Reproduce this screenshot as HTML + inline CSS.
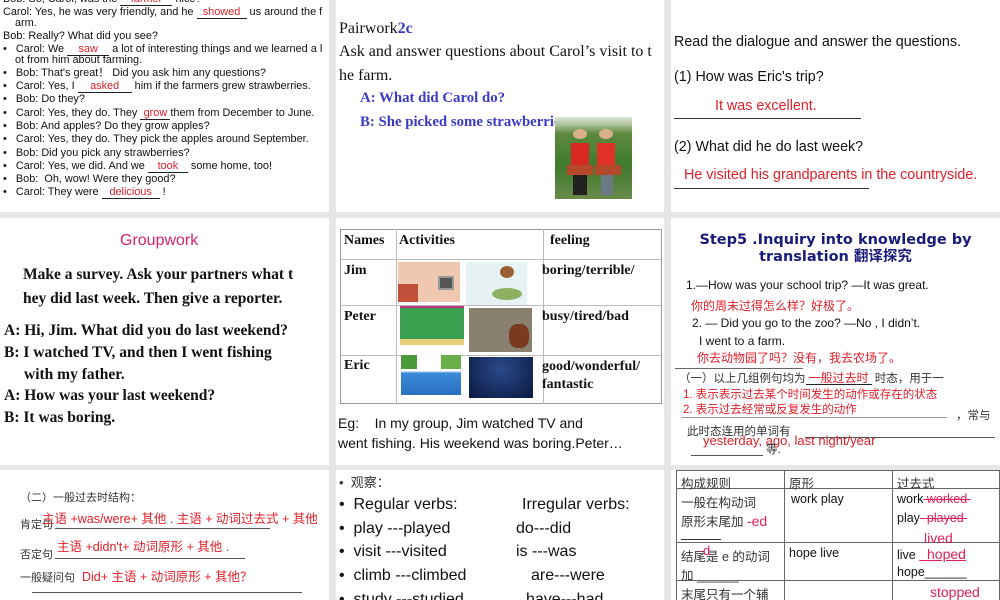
<!DOCTYPE html>
<html><head><meta charset="utf-8"><style>
*{margin:0;padding:0;box-sizing:border-box}
body{width:1000px;height:600px;background:#e6e6e6;position:relative;overflow:hidden;font-family:"Liberation Sans","Noto Sans CJK SC",sans-serif;color:#111}
.p{position:absolute;background:#fff;overflow:hidden}
.a{position:absolute;white-space:nowrap}
.r{color:#e0202a}
.u{display:inline-block;border-bottom:1px solid #222;text-align:center;line-height:1}
.s{font-family:"Liberation Serif","Noto Serif CJK SC",serif}
.cn{font-family:"Liberation Sans","Noto Sans CJK SC",sans-serif}
.hl{position:absolute;height:1px;background:#333}
</style></head><body>

<!-- panel 1 -->
<div class="p" style="left:0;top:0;width:329px;height:212px;font-size:10.9px;line-height:13px">
<div class="a" style="left:3px;top:-7px">Bob: So, Carol, was the <span class="u r" style="width:52px">farmer</span> nice?</div>
<div class="a" style="left:3px;top:6px">Carol: Yes, he was very friendly, and he <span class="u r" style="width:50px">showed</span> us around the f</div>
<div class="a" style="left:15px;top:17px">arm.</div>
<div class="a" style="left:3px;top:30px">Bob: Really? What did you see?</div>
<div class="a" style="left:3px;top:43px">•&nbsp;&nbsp; Carol: We <span class="u r" style="width:42px">saw</span> a lot of interesting things and we learned a l</div>
<div class="a" style="left:15px;top:54px">ot from him about farming.</div>
<div class="a" style="left:3px;top:67px">•&nbsp;&nbsp; Bob: That's great！ Did you ask him any questions?</div>
<div class="a" style="left:3px;top:80px">•&nbsp;&nbsp; Carol: Yes, I <span class="u r" style="width:54px">asked</span> him if the farmers grew strawberries.</div>
<div class="a" style="left:3px;top:93px">•&nbsp;&nbsp; Bob: Do they?</div>
<div class="a" style="left:3px;top:107px">•&nbsp;&nbsp; Carol: Yes, they do. They <span class="u r" style="width:30px">grow</span>them from December to June.</div>
<div class="a" style="left:3px;top:120px">•&nbsp;&nbsp; Bob: And apples? Do they grow apples?</div>
<div class="a" style="left:3px;top:133px">•&nbsp;&nbsp; Carol: Yes, they do. They pick the apples around September.</div>
<div class="a" style="left:3px;top:147px">•&nbsp;&nbsp; Bob: Did you pick any strawberries?</div>
<div class="a" style="left:3px;top:160px">•&nbsp;&nbsp; Carol: Yes, we did. And we <span class="u r" style="width:40px">took</span> some home, too!</div>
<div class="a" style="left:3px;top:173px">•&nbsp;&nbsp; Bob:&nbsp; Oh, wow! Were they good?</div>
<div class="a" style="left:3px;top:186px">•&nbsp;&nbsp; Carol: They were <span class="u r" style="width:58px">delicious</span> !</div>
</div>

<!-- panel 2 -->
<div class="p s" style="left:336px;top:0;width:328px;height:212px;font-size:16px">
<div class="a" style="left:3px;top:20px">Pairwork<span style="color:#3a3ac8;font-weight:bold">2c</span></div>
<div class="a" style="left:3px;top:43px">Ask and answer questions about Carol’s visit to t</div>
<div class="a" style="left:3px;top:67px">he farm.</div>
<div class="a" style="left:24px;top:90px;color:#3a3ac8;font-weight:bold;font-size:14.8px">A: What did Carol do?</div>
<div class="a" style="left:24px;top:114px;color:#3a3ac8;font-weight:bold;font-size:14.8px">B: She picked some strawberries.</div>
<div style="position:absolute;left:219px;top:117px;width:77px;height:82px;background:linear-gradient(180deg,#d8e4d0 0,#b9c9a8 8%,#5e8a3e 20%,#3f7a2c 60%,#6a8a4a 100%)">
<div style="position:absolute;left:18px;top:12px;width:14px;height:10px;background:#d9b08a;border-radius:50%"></div>
<div style="position:absolute;left:44px;top:12px;width:14px;height:10px;background:#d9b08a;border-radius:50%"></div>
<div style="position:absolute;left:16px;top:26px;width:18px;height:26px;background:#d82a22"></div>
<div style="position:absolute;left:42px;top:26px;width:18px;height:26px;background:#e03028"></div>
<div style="position:absolute;left:12px;top:48px;width:26px;height:10px;background:#b44a2a"></div>
<div style="position:absolute;left:40px;top:48px;width:26px;height:10px;background:#b44a2a"></div>
<div style="position:absolute;left:18px;top:58px;width:14px;height:20px;background:#222"></div>
<div style="position:absolute;left:46px;top:58px;width:12px;height:20px;background:#6b7a86"></div>
</div>
</div>

<!-- panel 3 -->
<div class="p" style="left:671px;top:0;width:329px;height:212px;font-size:14.3px">
<div class="a" style="left:3px;top:34px">Read the dialogue and answer the questions.</div>
<div class="a" style="left:3px;top:69px">(1) How was Eric's trip?</div>
<div class="a r" style="left:44px;top:98px">It was excellent.</div>
<div class="hl" style="left:3px;top:118px;width:187px"></div>
<div class="a" style="left:3px;top:139px">(2) What did he do last week?</div>
<div class="a r" style="left:13px;top:167px">He visited his grandparents in the countryside.</div>
<div class="hl" style="left:3px;top:188px;width:195px"></div>
</div>

<!-- panel 4 -->
<div class="p s" style="left:0;top:218px;width:329px;height:247px;font-weight:bold;font-size:15.5px">
<div class="a cn" style="left:120px;top:14px;color:#d6246e;font-weight:normal;font-size:16px;font-family:'Liberation Sans',sans-serif">Groupwork</div>
<div class="a" style="left:23px;top:48px">Make a survey. Ask your partners what t</div>
<div class="a" style="left:23px;top:72px">hey did last week. Then give a reporter.</div>
<div class="a" style="left:4px;top:104px">A: Hi, Jim. What did you do last weekend?</div>
<div class="a" style="left:4px;top:126px">B: I watched TV, and then I went fishing</div>
<div class="a" style="left:24px;top:148px">with my father.</div>
<div class="a" style="left:4px;top:169px">A: How was your last weekend?</div>
<div class="a" style="left:4px;top:191px">B: It was boring.</div>
</div>

<!-- panel 5 -->
<div class="p" style="left:336px;top:218px;width:328px;height:247px">
<div style="position:absolute;left:4px;top:11px;width:322px;height:175px;border:1px solid #999"></div>
<div style="position:absolute;left:60px;top:11px;width:1px;height:175px;background:#bbb"></div>
<div style="position:absolute;left:207px;top:11px;width:1px;height:175px;background:#bbb"></div>
<div style="position:absolute;left:4px;top:41px;width:322px;height:1px;background:#bbb"></div>
<div style="position:absolute;left:4px;top:87px;width:322px;height:1px;background:#bbb"></div>
<div style="position:absolute;left:4px;top:137px;width:322px;height:1px;background:#bbb"></div>
<div class="s" style="font-weight:bold;font-size:14px">
<div class="a" style="left:8px;top:15px">Names</div>
<div class="a" style="left:63px;top:15px">Activities</div>
<div class="a" style="left:214px;top:15px">feeling</div>
<div class="a" style="left:8px;top:45px">Jim</div>
<div class="a" style="left:206px;top:45px">boring/terrible/</div>
<div class="a" style="left:8px;top:91px">Peter</div>
<div class="a" style="left:206px;top:91px">busy/tired/bad</div>
<div class="a" style="left:8px;top:140px">Eric</div>
<div class="a" style="left:206px;top:140px;line-height:18px">good/wonderful/<br>fantastic</div>
</div>
<div style="position:absolute;left:62px;top:44px;width:62px;height:40px;background:#f0c8b0"><div style="position:absolute;left:40px;top:14px;width:16px;height:14px;background:#555;border:2px solid #999"></div><div style="position:absolute;left:0;top:22px;width:20px;height:18px;background:#c0503a"></div></div>
<div style="position:absolute;left:130px;top:44px;width:61px;height:43px;background:#e6f2f4"><div style="position:absolute;left:26px;top:26px;width:30px;height:12px;background:#8ab060;border-radius:50%"></div><div style="position:absolute;left:34px;top:4px;width:14px;height:12px;background:#9a6030;border-radius:50%"></div></div>
<div style="position:absolute;left:64px;top:88px;width:64px;height:39px;background:#3aa050;border-top:2px solid #c03080;border-bottom:6px solid #e4cf7a"></div>
<div style="position:absolute;left:133px;top:90px;width:63px;height:44px;background:#8a8070"><div style="position:absolute;left:40px;top:16px;width:20px;height:24px;background:#7a3a20;border-radius:40%"></div></div>
<div style="position:absolute;left:65px;top:137px;width:60px;height:40px;background:linear-gradient(#fff 0,#fff 40%,#3a8ad8 45%,#2a70c0 100%)"><div style="position:absolute;left:0;top:0;width:16px;height:14px;background:#4a9a3a"></div><div style="position:absolute;right:0;top:0;width:20px;height:14px;background:#6ab04a"></div></div>
<div style="position:absolute;left:133px;top:139px;width:64px;height:41px;background:radial-gradient(ellipse at 50% 30%,#2a4a8a,#0a1840)"></div>
<div class="a" style="left:2px;top:197px;font-size:14px">Eg:&nbsp;&nbsp;&nbsp; In my group, Jim watched TV and</div>
<div class="a" style="left:2px;top:217px;font-size:14px">went fishing. His weekend was boring.Peter…</div>
</div>

<!-- panel 6 -->
<div class="p" style="left:671px;top:218px;width:329px;height:247px;font-size:12px">
<div style="position:absolute;left:0;top:14px;width:329px;text-align:center;color:#1a1a7a;font-weight:bold;font-size:14.5px;line-height:17px;font-family:'DejaVu Sans','Noto Sans CJK SC',sans-serif">Step5 .Inquiry into knowledge by<br>translation 翻译探究</div>
<div class="a" style="left:15px;top:60px">1.—How was your school trip? —It was great.</div>
<div class="a r" style="left:20px;top:79px">你的周末过得怎么样？好极了。</div>
<div class="a" style="left:21px;top:98px">2. — Did you go to the zoo? —No , I didn’t.</div>
<div class="a" style="left:28px;top:116px">I went to a farm.</div>
<div class="a r" style="left:26px;top:131px">你去动物园了吗？没有，我去农场了。</div>
<div class="hl" style="left:4px;top:150px;width:128px;background:#666"></div>
<div class="a" style="left:8px;top:152px;font-size:11.5px;color:#333">（一）以上几组例句均为<span class="u r" style="width:66px;font-size:12px">一般过去时</span> 时态，用于一</div>
<div class="a r" style="left:12px;top:168px;font-size:11.5px">1. 表示表示过去某个时间发生的动作或存在的状态</div>
<div class="a r" style="left:12px;top:183px;font-size:11.5px">2. 表示过去经常或反复发生的动作</div>
<div class="hl" style="left:10px;top:199px;width:266px;background:#999"></div>
<div class="a" style="left:285px;top:189px;font-size:11.5px;color:#333">，常与</div>
<div class="a" style="left:16px;top:205px;font-size:11.5px;color:#333">此时态连用的单词有</div>
<div class="hl" style="left:134px;top:219px;width:190px;background:#555"></div>
<div class="a r" style="left:32px;top:215px;font-size:13px">yesterday, ago, last night/year</div>
<div class="a" style="left:95px;top:223px;font-size:11.5px;color:#333">等.</div>
<div class="hl" style="left:20px;top:237px;width:72px;background:#555"></div>
</div>

<!-- panel 7 -->
<div class="p" style="left:0;top:470px;width:329px;height:130px;font-size:11px;color:#333">
<div class="a" style="left:20px;top:19px">（二）一般过去时结构：</div>
<div class="a" style="left:20px;top:46px">肯定句</div>
<div class="hl" style="left:55px;top:58px;width:215px;background:#555"></div>
<div class="a r" style="left:42px;top:38px;font-size:12.5px">主语 +was/were+ 其他 . 主语 + 动词过去式 + 其他</div>
<div class="a" style="left:20px;top:76px">否定句</div>
<div class="hl" style="left:55px;top:88px;width:190px;background:#555"></div>
<div class="a r" style="left:57px;top:66px;font-size:12.5px">主语 +didn't+ 动词原形 + 其他 .</div>
<div class="a" style="left:20px;top:99px">一般疑问句</div>
<div class="a r" style="left:82px;top:96px;font-size:12.5px">Did+ 主语 + 动词原形 + 其他？</div>
<div class="hl" style="left:32px;top:122px;width:270px;background:#555"></div>
</div>

<!-- panel 8 -->
<div class="p" style="left:336px;top:470px;width:328px;height:130px;font-size:16px">
<div class="a" style="left:3px;top:2px;font-size:13px;color:#333">•&nbsp; 观察：</div>
<div class="a" style="left:3px;top:26px">•&nbsp; Regular verbs:</div>
<div class="a" style="left:186px;top:26px">Irregular verbs:</div>
<div class="a" style="left:3px;top:50px">•&nbsp; play ---played</div>
<div class="a" style="left:180px;top:50px">do---did</div>
<div class="a" style="left:3px;top:73px">•&nbsp; visit ---visited</div>
<div class="a" style="left:180px;top:73px">is ---was</div>
<div class="a" style="left:3px;top:97px">•&nbsp; climb ---climbed</div>
<div class="a" style="left:195px;top:97px">are---were</div>
<div class="a" style="left:3px;top:121px">•&nbsp; study ---studied</div>
<div class="a" style="left:190px;top:121px">have---had</div>
</div>

<!-- panel 9 -->
<div class="p" style="left:671px;top:470px;width:329px;height:130px;font-size:12.5px">
<div style="position:absolute;left:5px;top:0;width:324px;height:140px;border:1px solid #666"></div>
<div style="position:absolute;left:5px;top:18px;width:324px;height:1px;background:#666"></div>
<div style="position:absolute;left:5px;top:72px;width:324px;height:1px;background:#666"></div>
<div style="position:absolute;left:5px;top:110px;width:324px;height:1px;background:#666"></div>
<div style="position:absolute;left:113px;top:0;width:1px;height:140px;background:#666"></div>
<div style="position:absolute;left:221px;top:0;width:1px;height:140px;background:#666"></div>
<div class="a" style="left:10px;top:3px;color:#333">构成规则</div>
<div class="a" style="left:118px;top:3px;color:#333">原形</div>
<div class="a" style="left:226px;top:3px;color:#333">过去式</div>
<div class="a" style="left:10px;top:22px;color:#333">一般在构动词</div>
<div class="a" style="left:10px;top:41px;color:#333">原形末尾加 <span style="color:#e0205a;font-size:14px">-ed</span></div>
<div class="hl" style="left:10px;top:69px;width:40px;background:#333"></div>
<div class="a" style="left:120px;top:22px">work play</div>
<div class="a" style="left:226px;top:22px">work<span style="color:#e0205a;text-decoration:line-through">&nbsp;worked&nbsp;</span></div>
<div class="a" style="left:226px;top:41px">play<span style="color:#e0205a;text-decoration:line-through">&nbsp;&nbsp;played&nbsp;</span></div>
<div class="a" style="left:253px;top:60px;color:#e0205a;font-size:14px">lived</div>
<div class="a" style="left:10px;top:76px;color:#333">结尾是 e 的动词</div>
<div class="a" style="left:28px;top:74px;color:#e0205a">-d</div>
<div class="a" style="left:10px;top:95px;color:#333">加 ______</div>
<div class="a" style="left:118px;top:76px">hope live</div>
<div class="a" style="left:226px;top:76px">live <span style="color:#e0205a;font-size:14px;text-decoration:underline">&nbsp;&nbsp;hoped</span></div>
<div class="a" style="left:226px;top:95px">hope______</div>
<div class="a" style="left:10px;top:114px;color:#333">末尾只有一个辅</div>
<div class="a" style="left:259px;top:114px;color:#e0205a;font-size:14px">stopped</div>
</div>

</body></html>
